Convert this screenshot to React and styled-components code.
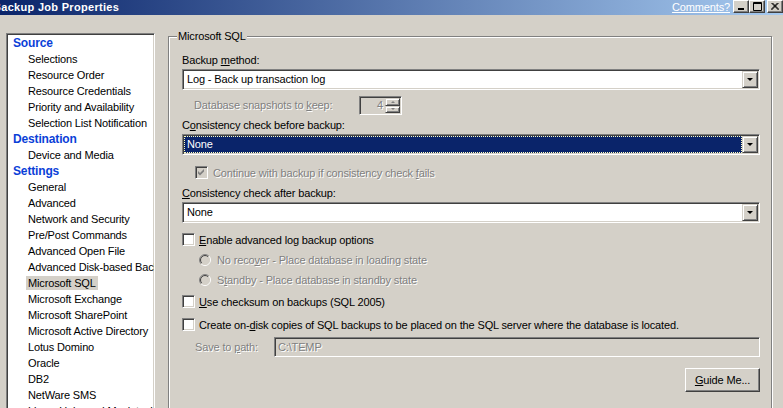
import React from "react"
import styled, { createGlobalStyle } from "styled-components"

const GlobalStyle = createGlobalStyle`
  html, body { margin: 0; padding: 0; overflow: hidden; }
  body {
    font-family: "Liberation Sans", Arial, sans-serif;
    font-size: 11px;
    letter-spacing: -0.15px;
    color: #000;
    background: #d4d0c8;
  }
`

const Window = styled.div`
  width: 783px;
  height: 408px;
  overflow: hidden;
  background: #d4d0c8;
  display: flex;
  flex-direction: column;
`

const TitleBar = styled.div`
  height: 15px;
  flex: none;
  display: flex;
  align-items: flex-start;
  background: linear-gradient(to right, #0a246a, #a6caf0);
`

const Title = styled.div`
  margin-left: -7px;
  line-height: 14px;
  font-weight: bold;
  letter-spacing: 0.3px;
  color: #fff;
  flex: 1;
`

const CommentsLink = styled.a`
  color: #fff;
  text-decoration: underline;
  line-height: 14px;
  margin-right: 3px;
  cursor: pointer;
`

const CaptionButton = styled.div`
  width: 16px;
  height: 13px;
  box-sizing: border-box;
  margin-left: ${p => p.$gap || 0}px;
  background: #d4d0c8;
  border: 1px solid;
  border-color: #fff #404040 #404040 #fff;
  box-shadow: inset -1px -1px #808080;
  display: flex;
  align-items: center;
  justify-content: center;
`

const Body = styled.div`
  flex: 1;
  display: flex;
  align-items: flex-start;
  gap: 13px;
  padding: 18px 11px 0 6px;
  min-height: 0;
`

const Tree = styled.div`
  width: 149px;
  height: 420px;
  flex: none;
  box-sizing: border-box;
  background: #fff;
  border: 1px solid;
  border-color: #808080 #fff #fff #808080;
  box-shadow: inset 1px 1px #404040, inset -1px -1px #d4d0c8;
  padding: 1px;
  overflow: hidden;
`

const TreeItem = styled.div`
  height: 16px;
  line-height: 16px;
  white-space: nowrap;
  padding-left: ${p => (p.$header ? 3 : 18)}px;
  font-weight: ${p => (p.$header ? "bold" : "normal")};
  font-size: ${p => (p.$header ? 12 : 11)}px;
  color: ${p => (p.$header ? "#0b3fd8" : "#000")};
`

const ItemText = styled.span`
  padding: 1px 2px;
  background: ${p => (p.$selected ? "#d4d0c8" : "transparent")};
`

const GroupBox = styled.div`
  position: relative;
  flex: none;
  width: 604px;
  height: 420px;
  box-sizing: border-box;
  margin-top: 3px;
  border: 1px solid #808080;
  box-shadow: inset 1px 1px #fff, 1px 1px #fff;
  padding: 17px 11px 0 13px;
  display: flex;
  flex-direction: column;
`

const Legend = styled.div`
  position: absolute;
  top: -7px;
  left: 8px;
  padding: 0 1px;
  line-height: 13px;
  background: #d4d0c8;
`

const Label = styled.div`
  line-height: 13px;
  margin-top: ${p => p.$mt || 0}px;
  color: ${p => (p.$disabled ? "#808080" : "#000")};
  text-shadow: ${p => (p.$disabled ? "1px 1px 0 #fff" : "none")};
`

const Sunken = styled.div`
  box-sizing: border-box;
  border: 1px solid;
  border-color: #808080 #fff #fff #808080;
  box-shadow: inset 1px 1px #404040, inset -1px -1px #d4d0c8;
  padding: 1px;
`

const Combo = styled(Sunken)`
  height: 21px;
  margin-top: ${p => p.$mt || 0}px;
  display: flex;
  background: #fff;
`

const ComboText = styled.div`
  flex: 1;
  line-height: 15px;
  padding-left: 2px;
  background: ${p => (p.$focused ? "#0a246a" : "#fff")};
  color: ${p => (p.$focused ? "#fff" : "#000")};
  border: 1px ${p => (p.$focused ? "dotted #ffffc0" : "solid #fff")};
`

const Raised = styled.div`
  box-sizing: border-box;
  background: #d4d0c8;
  border: 1px solid;
  border-color: #d4d0c8 #404040 #404040 #d4d0c8;
  box-shadow: inset 1px 1px #fff, inset -1px -1px #808080;
  display: flex;
  align-items: center;
  justify-content: center;
`

const DropButton = styled(Raised)`
  width: 16px;
  flex: none;
`

const Arrow = styled.div`
  width: 0;
  height: 0;
  border-left: ${p => p.$size || 4}px solid transparent;
  border-right: ${p => p.$size || 4}px solid transparent;
  border-top: ${p => p.$size || 4}px solid ${p => p.$color || "#000"};
  transform: ${p => (p.$up ? "rotate(180deg)" : "none")};
`

const SnapshotRow = styled.div`
  display: flex;
  align-items: center;
  margin-top: 6px;
  padding-left: 12px;
`

const SnapLabel = styled(Label)`
  width: 165px;
`

const Spinner = styled(Sunken)`
  width: 43px;
  height: 19px;
  display: flex;
  background: #d4d0c8;
`

const SpinValue = styled.div`
  flex: 1;
  text-align: right;
  line-height: 15px;
  padding-right: 2px;
  color: #808080;
  text-shadow: 1px 1px 0 #fff;
`

const SpinButtons = styled.div`
  width: 15px;
  display: flex;
  flex-direction: column;
`

const SpinButton = styled(Raised)`
  flex: 1;
`

const CheckRow = styled.div`
  display: flex;
  align-items: center;
  height: 13px;
  margin-top: ${p => p.$mt || 0}px;
  padding-left: ${p => p.$indent || 0}px;
  gap: ${p => p.$gap || 4}px;
  color: ${p => (p.$disabled ? "#808080" : "#000")};
  text-shadow: ${p => (p.$disabled ? "1px 1px 0 #fff" : "none")};
  white-space: nowrap;
`

const CheckBox = styled(Sunken)`
  width: 13px;
  height: 13px;
  padding: 0;
  flex: none;
  background: ${p => (p.$disabled ? "#d4d0c8" : "#fff")};
  display: flex;
  align-items: center;
  justify-content: center;
`

const PathRow = styled.div`
  display: flex;
  align-items: center;
  margin-top: 6px;
  padding-left: 13px;
`

const PathLabel = styled(Label)`
  width: 79px;
  flex: none;
`

const PathInput = styled(Sunken)`
  flex: 1;
  height: 20px;
  line-height: 16px;
  padding-left: 3px;
  background: #d4d0c8;
  color: #808080;
  text-shadow: 1px 1px 0 #fff;
`

const ButtonRow = styled.div`
  display: flex;
  justify-content: flex-end;
  margin-top: 11px;
`

const PushButton = styled(Raised)`
  width: 75px;
  height: 24px;
  border-color: #fff #404040 #404040 #fff;
  box-shadow: inset -1px -1px #808080;
`

const treeItems = [
  ["Source", true],
  ["Selections"],
  ["Resource Order"],
  ["Resource Credentials"],
  ["Priority and Availability"],
  ["Selection List Notification"],
  ["Destination", true],
  ["Device and Media"],
  ["Settings", true],
  ["General"],
  ["Advanced"],
  ["Network and Security"],
  ["Pre/Post Commands"],
  ["Advanced Open File"],
  ["Advanced Disk-based Backup"],
  ["Microsoft SQL", false, true],
  ["Microsoft Exchange"],
  ["Microsoft SharePoint"],
  ["Microsoft Active Directory"],
  ["Lotus Domino"],
  ["Oracle"],
  ["DB2"],
  ["NetWare SMS"],
  ["Linux, Unix, and Macintosh"],
]

const CheckMark = ({ color }) => (
  <svg width="9" height="9" viewBox="0 0 9 9">
    <path d="M1 3 L3 5 L7 1 L7 3.5 L3 7.5 L1 5.5 Z" fill={color} />
  </svg>
)

const arc = (r, from, to) => {
  const c = 6
  const a = (deg) => [c + r * Math.cos((deg * Math.PI) / 180), c - r * Math.sin((deg * Math.PI) / 180)]
  const [x1, y1] = a(from)
  const [x2, y2] = a(to)
  return `M${x1} ${y1} A${r} ${r} 0 0 0 ${x2} ${y2}`
}

const Radio = () => (
  <svg width="12" height="12" viewBox="0 0 12 12" style={{ flex: "none" }}>
    <circle cx="6" cy="6" r="4.5" fill="#d4d0c8" />
    <path d={arc(5.5, 45, 225)} stroke="#808080" fill="none" />
    <path d={arc(5.5, 225, 405)} stroke="#fff" fill="none" />
    <path d={arc(4.5, 45, 225)} stroke="#404040" fill="none" />
    <path d={arc(4.5, 225, 405)} stroke="#d4d0c8" fill="none" />
  </svg>
)

const ComboBox = ({ mt, focused, children }) => (
  <Combo $mt={mt}>
    <ComboText $focused={focused}>{children}</ComboText>
    <DropButton>
      <Arrow $size={3.5} />
    </DropButton>
  </Combo>
)

export default function App() {
  return (
    <Window>
      <GlobalStyle />
      <TitleBar>
        <Title>Backup Job Properties</Title>
        <CommentsLink>Comments?</CommentsLink>
        <CaptionButton>
          <svg width="8" height="9" viewBox="0 0 8 9"><rect x="1" y="6" width="6" height="2" fill="#000" /></svg>
        </CaptionButton>
        <CaptionButton>
          <svg width="9" height="9" viewBox="0 0 9 9"><path d="M0.5 0.5h8v8h-8z M0.5 1.5h8" stroke="#000" fill="none" /></svg>
        </CaptionButton>
        <CaptionButton $gap={2}>
          <svg width="8" height="7" viewBox="0 0 8 7"><path d="M0.5 0 L7.5 7 M1.5 0 L8 6.5 M7.5 0 L0.5 7 M6.5 0 L0 6.5" stroke="#000" strokeWidth="1" /></svg>
        </CaptionButton>
      </TitleBar>
      <Body>
        <Tree>
          {treeItems.map(([name, header, selected]) => (
            <TreeItem key={name} $header={header}>
              <ItemText $selected={selected}>{name}</ItemText>
            </TreeItem>
          ))}
        </Tree>
        <GroupBox>
          <Legend>Microsoft SQL</Legend>
          <Label>Backup <u>m</u>ethod:</Label>
          <ComboBox mt={2}>Log - Back up transaction log</ComboBox>
          <SnapshotRow>
            <SnapLabel $disabled>Database snapshots to <u>k</u>eep:</SnapLabel>
            <Spinner>
              <SpinValue>4</SpinValue>
              <SpinButtons>
                <SpinButton><Arrow $size={2.5} $color="#808080" $up /></SpinButton>
                <SpinButton><Arrow $size={2.5} $color="#808080" /></SpinButton>
              </SpinButtons>
            </Spinner>
          </SnapshotRow>
          <Label $mt={4}>C<u>o</u>nsistency check before backup:</Label>
          <ComboBox mt={2} focused>None</ComboBox>
          <CheckRow $mt={11} $indent={13} $gap={5} $disabled>
            <CheckBox $disabled><CheckMark color="#808080" /></CheckBox>
            <span>Continue with backup if consistency check <u>f</u>ails</span>
          </CheckRow>
          <Label $mt={8}><u>C</u>onsistency check after backup:</Label>
          <ComboBox mt={2}>None</ComboBox>
          <CheckRow $mt={10}>
            <CheckBox />
            <span><u>E</u>nable advanced log backup options</span>
          </CheckRow>
          <CheckRow $mt={7} $indent={17} $gap={6} $disabled>
            <Radio />
            <span>No reco<u>v</u>er - Place database in loading state</span>
          </CheckRow>
          <CheckRow $mt={7} $indent={17} $gap={6} $disabled>
            <Radio />
            <span>S<u>t</u>andby - Place database in standby state</span>
          </CheckRow>
          <CheckRow $mt={9}>
            <CheckBox />
            <span><u>U</u>se checksum on backups (SQL 2005)</span>
          </CheckRow>
          <CheckRow $mt={10}>
            <CheckBox />
            <span>Create on-<u>d</u>isk copies of SQL backups to be placed on the SQL server where the database is located.</span>
          </CheckRow>
          <PathRow>
            <PathLabel $disabled>Save to <u>p</u>ath:</PathLabel>
            <PathInput>C:\TEMP</PathInput>
          </PathRow>
          <ButtonRow>
            <PushButton><span><u>G</u>uide Me...</span></PushButton>
          </ButtonRow>
        </GroupBox>
      </Body>
    </Window>
  )
}
